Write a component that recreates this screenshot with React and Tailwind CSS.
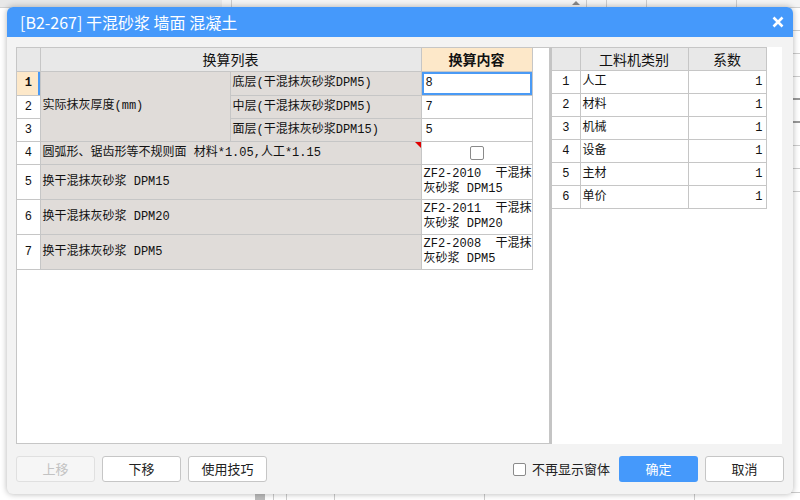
import React from "react";

const cjk = { fontFamily: '"Noto Sans CJK SC", "Noto Sans", sans-serif' };
const cell = { fontFamily: '"Liberation Mono", "Noto Sans CJK SC", monospace' };

const rows = [
  { n: 2, b: "中层(干混抹灰砂浆DPM5)", v: "7" },
  { n: 3, b: "面层(干混抹灰砂浆DPM15)", v: "5" },
];

const swaps = [
  { n: 5, a: "换干混抹灰砂浆 DPM15", v1: "ZF2-2010  干混抹", v2: "灰砂浆 DPM15" },
  { n: 6, a: "换干混抹灰砂浆 DPM20", v1: "ZF2-2011  干混抹", v2: "灰砂浆 DPM20" },
  { n: 7, a: "换干混抹灰砂浆 DPM5", v1: "ZF2-2008  干混抹", v2: "灰砂浆 DPM5" },
];

const kinds = ["人工", "材料", "机械", "设备", "主材", "单价"];

function Btn({ children, disabled, primary }) {
  if (primary)
    return (
      <button className="w-[79px] h-[26px] rounded-[3px] bg-[#4599fb] text-white text-[13px]">
        {children}
      </button>
    );
  return (
    <button
      className={
        disabled
          ? "w-[79px] h-[26px] rounded-[3px] border border-[#e0e0e0] bg-[#f6f6f6] text-[#c2c2c2] text-[13px]"
          : "w-[79px] h-[26px] rounded-[3px] border border-[#c6c6c6] bg-white text-[#222] text-[13px]"
      }
    >
      {children}
    </button>
  );
}

export default function App() {
  return (
    <div className="relative w-[800px] h-[500px] overflow-hidden bg-white" style={cjk}>
      {/* background app, mostly hidden by the dialog */}
      <div className="absolute inset-0">
        <div className="flex h-[8px] border-b border-[#d0d0d0] bg-[#f4f4f4]">
          <div className="w-[222px] bg-[#e8e8e8]" />
          <div className="w-[10px] border-r border-[#ccc]" />
          <div className="w-[355px] border-r border-[#ccc] relative">
            <div className="absolute right-[6px] top-[1px] w-0 h-0 border-l-[4px] border-r-[4px] border-b-[4px] border-l-transparent border-r-transparent border-b-[#888]" />
          </div>
          <div className="w-[20px] border-r border-[#ccc]" />
          <div className="w-[40px] border-r border-[#ccc]" />
          <div className="w-[90px] border-r border-[#ccc]" />
          <div className="flex-1" />
        </div>
        <div className="absolute right-0 top-[8px] w-[8px] flex flex-col">
          {[0, 1, 2, 3, 4, 5, 6, 7].map((i) => (
            <div key={i} className={i === 3 || i === 4 ? "h-[23px] border-b-2 border-[#999]" : "h-[23px] border-b border-[#ccc]"} />
          ))}
        </div>
        <div className="absolute left-[255px] right-0 bottom-0 h-[8px] flex border-t border-[#ccc]">
          <div className="w-[10px] bg-[#bcbcbc]" />
          <div className="w-[8px]" />
          <div className="w-[14px] border-l border-r border-[#ccc]" />
          <div className="w-[48px] border-r border-[#ccc]" />
          <div className="w-[150px] border-r border-[#ccc]" />
          <div className="w-[210px] border-r border-[#ccc]" />
          <div className="flex-1" />
        </div>
      </div>

      {/* dialog */}
      <div className="absolute left-[7px] top-[7px] w-[786px] h-[487px] rounded-[6px] bg-[#f3f3f3] shadow-[0_0_6px_rgba(0,0,0,0.3)] flex flex-col overflow-hidden">
        <div className="h-[30px] shrink-0 bg-[#4599fb] flex items-center justify-between pl-[13px] pr-[9px]">
          <span className="text-white text-[16px]">[B2-267] 干混砂浆 墙面 混凝土</span>
          <svg width="12" height="12" viewBox="0 0 12 12">
            <path d="M1.5 1.5 L10.5 10.5 M10.5 1.5 L1.5 10.5" stroke="white" strokeWidth="2.6" />
          </svg>
        </div>

        <div className="flex px-[9px] pt-[10px]">
          {/* left panel */}
          <div className="w-[534px] h-[397px] border border-[#c6c6c6] bg-white">
            <table className="border-collapse text-[12px] text-[#111] table-fixed" style={cell}>
              <colgroup>
                <col className="w-[23px]" />
                <col className="w-[190px]" />
                <col className="w-[191px]" />
                <col className="w-[111px]" />
              </colgroup>
              <tbody>
                <tr className="h-[23px]">
                  <td className="border-r border-b border-[#c6c6c6] bg-[#e8e8e8]" />
                  <td colSpan={2} className="border border-t-0 border-[#c6c6c6] bg-[#e8e8e8] text-center text-[14px]" style={cjk}>
                    换算列表
                  </td>
                  <td className="border border-t-0 border-[#c6c6c6] bg-[#fde8c9] text-center text-[14px] font-bold" style={cjk}>
                    换算内容
                  </td>
                </tr>
                <tr className="h-[23px]">
                  <td className="relative border border-l-0 border-[#c6c6c6] bg-[#fde8c9] text-center font-bold">
                    1
                    <span className="absolute right-0 top-0 bottom-0 w-[2px] bg-[#4a9af5]" />
                  </td>
                  <td rowSpan={3} className="border border-[#c6c6c6] bg-[#e0dcd9] pl-[2px]">
                    实际抹灰厚度(mm)
                  </td>
                  <td className="border border-[#c6c6c6] bg-[#e0dcd9] pl-[2px]">底层(干混抹灰砂浆DPM5)</td>
                  <td className="border border-[#c6c6c6] p-0">
                    <div className="h-[23px] border-2 border-[#4a9af5] pl-[2px] leading-[19px]">8</div>
                  </td>
                </tr>
                {rows.map((r) => (
                  <tr key={r.n} className="h-[23px]">
                    <td className="border border-l-0 border-[#c6c6c6] text-center">{r.n}</td>
                    <td className="border border-[#c6c6c6] bg-[#e0dcd9] pl-[2px]">{r.b}</td>
                    <td className="border border-[#c6c6c6] pl-[4px]">{r.v}</td>
                  </tr>
                ))}
                <tr className="h-[23px]">
                  <td className="border border-l-0 border-[#c6c6c6] text-center">4</td>
                  <td colSpan={2} className="relative border border-[#c6c6c6] bg-[#e0dcd9] pl-[2px] whitespace-nowrap">
                    圆弧形、锯齿形等不规则面 材料*1.05,人工*1.15
                    <span className="absolute right-0 top-0 w-0 h-0 border-t-[6px] border-l-[6px] border-t-[#e00000] border-l-transparent" />
                  </td>
                  <td className="border border-[#c6c6c6]">
                    <div className="mx-auto w-[14px] h-[14px] rounded-[2px] border border-[#8a8a8a] bg-white" />
                  </td>
                </tr>
                {swaps.map((r) => (
                  <tr key={r.n} className="h-[35px]">
                    <td className="border border-l-0 border-[#c6c6c6] text-center">{r.n}</td>
                    <td colSpan={2} className="border border-[#c6c6c6] bg-[#e0dcd9] pl-[2px]">{r.a}</td>
                    <td className="border border-[#c6c6c6] pl-[2px] leading-[15px] whitespace-pre">
                      {r.v1}
                      <br />
                      {r.v2}
                    </td>
                  </tr>
                ))}
              </tbody>
            </table>
          </div>

          {/* right panel */}
          <div className="w-[232px] h-[397px] border-l-2 border-[#c4c4c4] bg-white">
            <table className="border-collapse text-[12px] text-[#111] table-fixed" style={cell}>
              <colgroup>
                <col className="w-[28px]" />
                <col className="w-[108px]" />
                <col className="w-[78px]" />
              </colgroup>
              <tbody>
                <tr className="h-[23px]">
                  <td className="border border-l-0 border-[#c6c6c6] bg-[#e8e8e8]" />
                  <td className="border border-[#c6c6c6] bg-[#e8e8e8] text-center text-[14px]" style={cjk}>工料机类别</td>
                  <td className="border border-[#c6c6c6] bg-[#e8e8e8] text-center text-[14px]" style={cjk}>系数</td>
                </tr>
                {kinds.map((k, i) => (
                  <tr key={k} className="h-[23px]">
                    <td className="border border-l-0 border-[#c6c6c6] text-center">{i + 1}</td>
                    <td className="border border-[#c6c6c6] pl-[2px]">{k}</td>
                    <td className="border border-[#c6c6c6] text-right pr-[3px]">1</td>
                  </tr>
                ))}
              </tbody>
            </table>
          </div>
        </div>

        {/* footer */}
        <div className="flex items-center justify-between px-[9px] mt-[12px]">
          <div className="flex gap-[7px]">
            <Btn disabled>上移</Btn>
            <Btn>下移</Btn>
            <Btn>使用技巧</Btn>
          </div>
          <div className="flex items-center">
            <div className="w-[13px] h-[13px] rounded-[2px] border border-[#8a8a8a] bg-white mr-[6px]" />
            <span className="text-[13px] text-[#222] mr-[9px]">不再显示窗体</span>
            <div className="flex gap-[7px]">
              <Btn primary>确定</Btn>
              <Btn>取消</Btn>
            </div>
          </div>
        </div>
      </div>
    </div>
  );
}
